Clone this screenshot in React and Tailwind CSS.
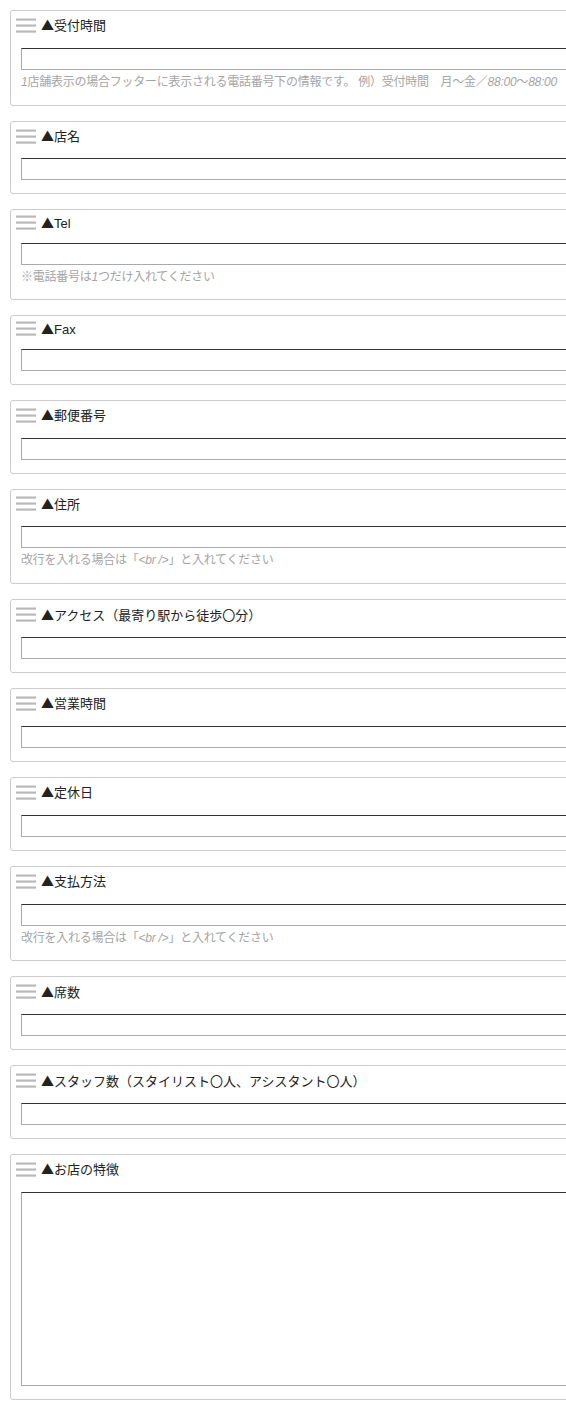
const fields = [
    { label: "受付時間", help: "store" },
    { label: "店名" },
    { label: "Tel", latin: true, help: "tel" },
    { label: "Fax", latin: true },
    { label: "郵便番号" },
    { label: "住所", help: "br" },
    { label: "アクセス（最寄り駅から徒歩〇分）" },
    { label: "営業時間" },
    { label: "定休日" },
    { label: "支払方法", help: "br" },
    { label: "席数" },
    { label: "スタッフ数（スタイリスト〇人、アシスタント〇人）" },
    { label: "お店の特徴", textarea: true },
]

const HelpText = ({ kind }) => {
    if (kind === "store") {
        return (
            <>
                <i>1</i>店舗表示の場合フッターに表示される電話番号下の情報です。 例）受付時間　月～金／<i>88:00</i>～<i>88:00</i>
            </>
        )
    }
    if (kind === "tel") {
        return (
            <>
                ※電話番号は<i>1</i>つだけ入れてください
            </>
        )
    }
    return (
        <>
            改行を入れる場合は「<i>&lt;br /&gt;</i>」と入れてください
        </>
    )
}

const Handle = () => (
    <div className="flex flex-col gap-[3px] w-[20px] shrink-0">
        <span className="block h-[3px] bg-linear-to-b from-[#eeeeee] via-[#b8b8b8] to-[#dddddd]" />
        <span className="block h-[3px] bg-linear-to-b from-[#eeeeee] via-[#b8b8b8] to-[#dddddd]" />
        <span className="block h-[3px] bg-linear-to-b from-[#eeeeee] via-[#b8b8b8] to-[#dddddd]" />
    </div>
)

const FieldBox = ({ field }) => (
    <div className="w-[640px] border border-[#cccccc] rounded-[3px] bg-white pl-[5px] pb-[13px]">
        <div className={`flex items-center gap-[5px] mb-[8px] ${field.latin ? "h-[24.2px]" : "h-[28.85px]"}`}>
            <Handle />
            <span className="text-[13px] text-[#222222] leading-none whitespace-nowrap">
                <span style={{ fontFamily: '"Noto Sans CJK JP", sans-serif' }}>▲</span>
                {field.label}
            </span>
        </div>
        <div className="pl-[5px]">
            {field.textarea ? (
                <textarea className="block w-[610px] h-[194px] border border-[#aaaaaa] border-t-[#333333] bg-white resize-none outline-none" />
            ) : (
                <input className="block w-[610px] h-[22px] border border-[#aaaaaa] border-t-[#333333] bg-white outline-none" />
            )}
            {field.help && (
                <p className="h-[21.8px] pt-[3px] text-[12px] leading-[18px] tracking-[-0.25px] text-[#a5a5a5] whitespace-nowrap">
                    <HelpText kind={field.help} />
                </p>
            )}
        </div>
    </div>
)

export default function App() {
    return (
        <div
            className="w-[566px] h-[1406px] overflow-hidden bg-white"
            style={{ fontFamily: '"Liberation Sans", "Noto Sans CJK JP", sans-serif' }}
        >
            <div className="pt-[10px] pl-[10px] flex flex-col gap-[15px]">
                {fields.map((field, index) => (
                    <FieldBox field={field} key={index} />
                ))}
            </div>
        </div>
    )
}
